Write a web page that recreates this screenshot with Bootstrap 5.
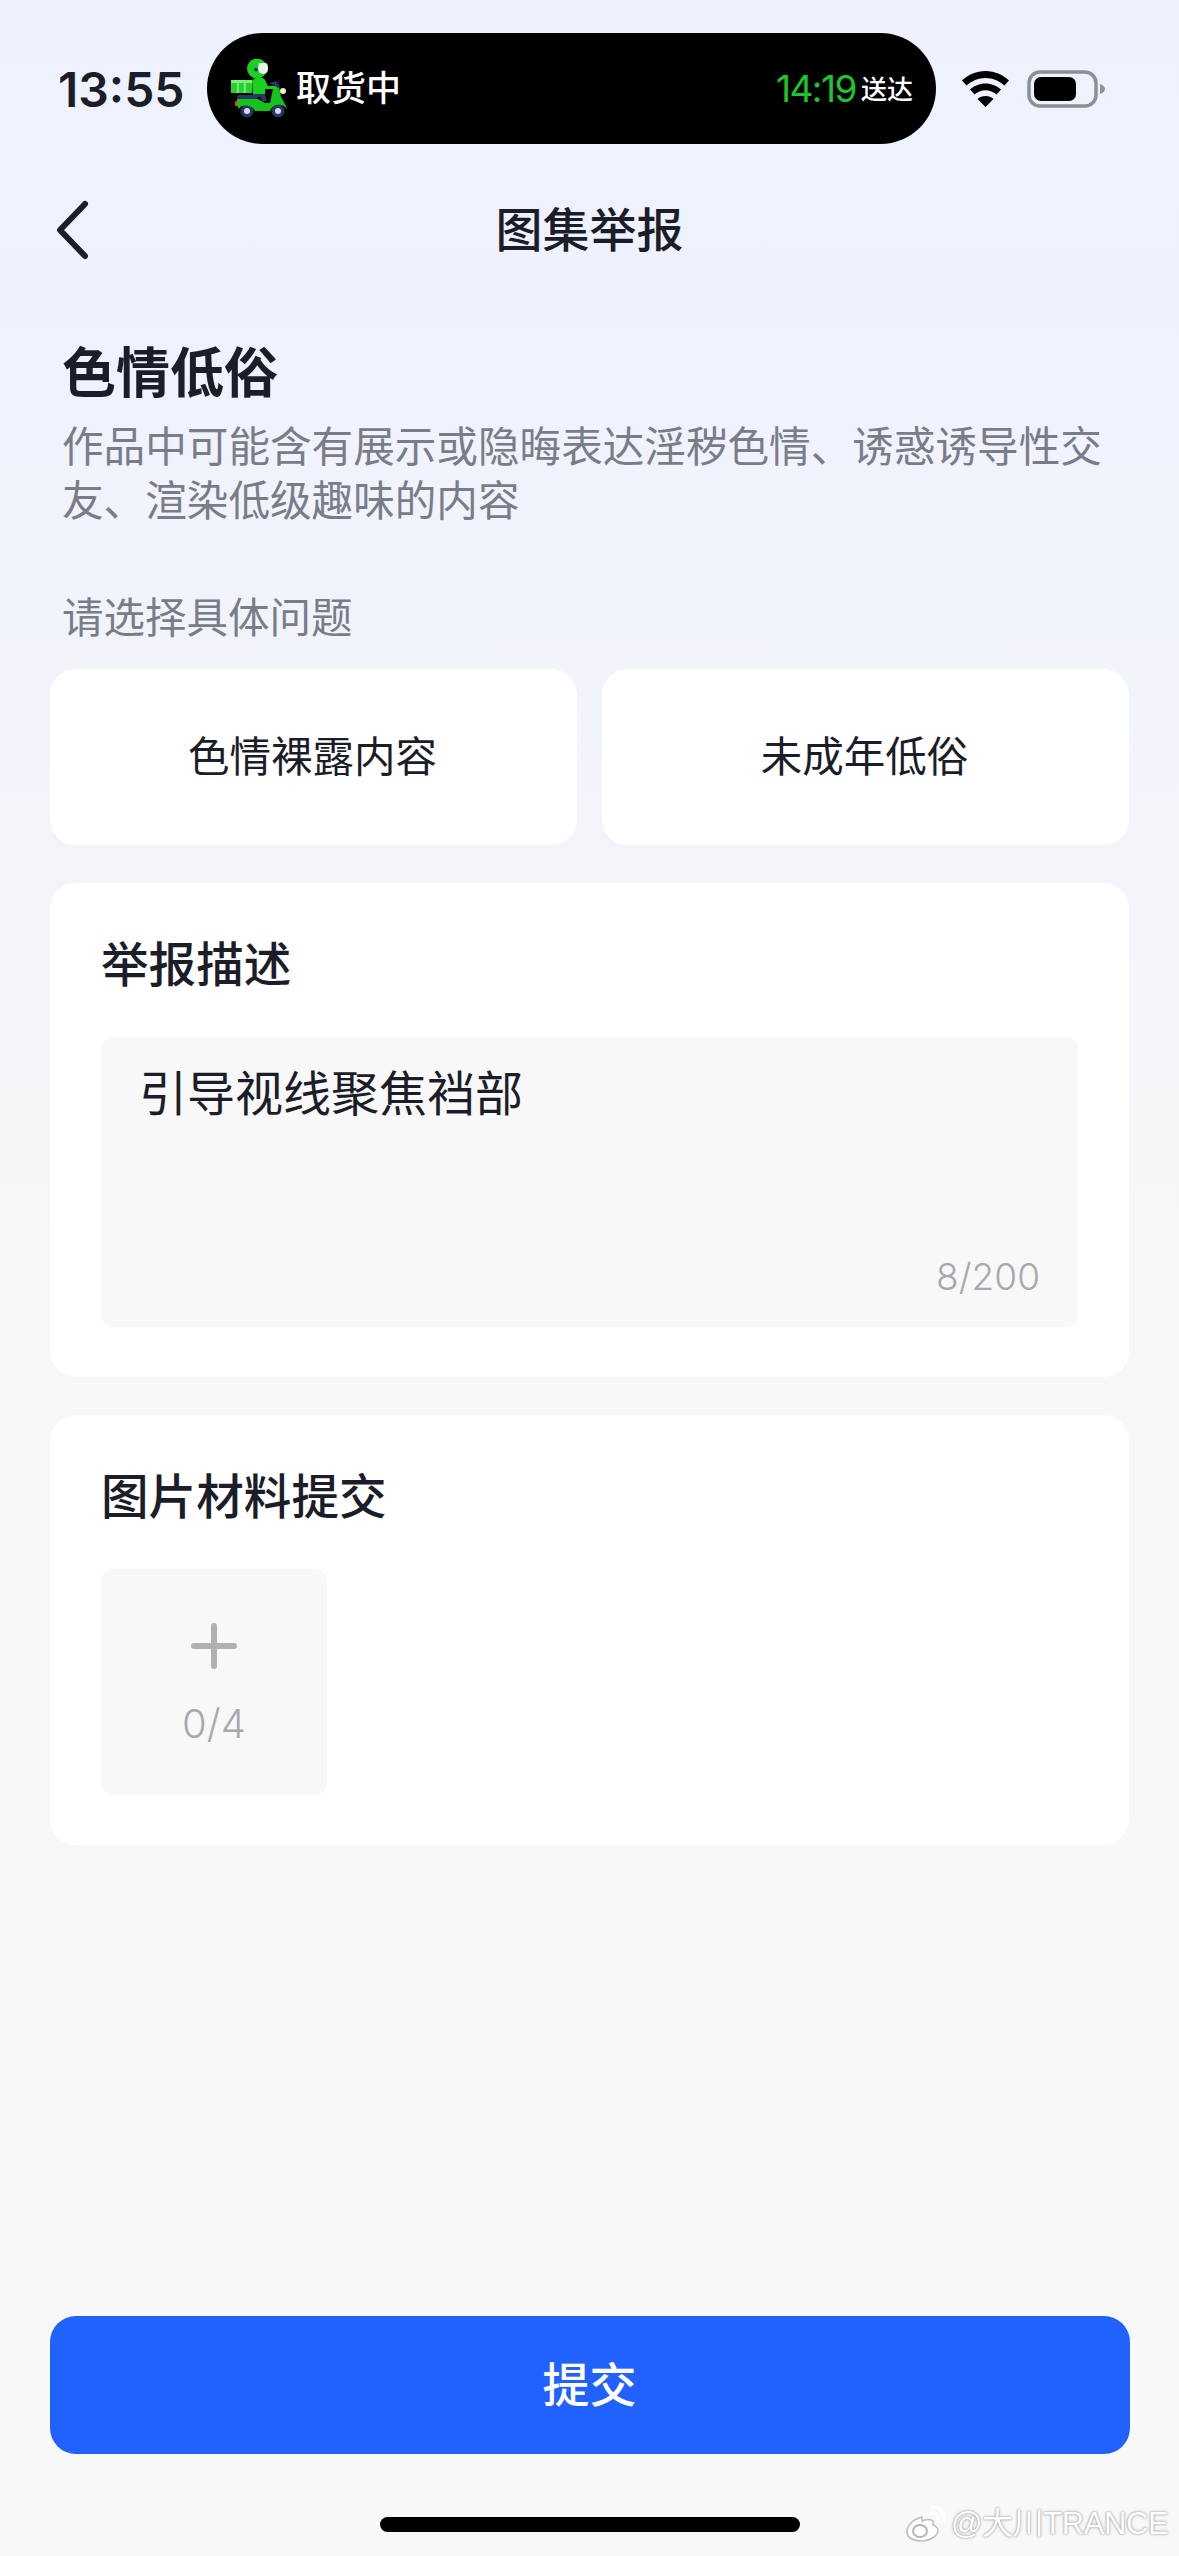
<!DOCTYPE html>
<html lang="zh-CN">
<head>
    <meta charset="UTF-8">
    <meta name="viewport" content="width=device-width, initial-scale=1.0">
    <title>图集举报</title>
    <link href="https://cdn.jsdelivr.net/npm/bootstrap@5.3.2/dist/css/bootstrap.min.css" rel="stylesheet">
    <style>
        body {
            width: 1179px;
            height: 2556px;
            overflow: hidden;
            font-family: Inter, "Noto Sans CJK SC", sans-serif;
            color: #1b1d28;
            background: linear-gradient(180deg, #eef2ff 0, #eff2fe 300px, #f4f5fa 900px, #f8f8f8 1400px, #f8f8f8 100%);
        }
        .phone-page { height: 2556px; position: relative; }

        /* status bar */
        .status-row { padding: 33px 0 0 58px; height: 144px; }
        .clock { width: 149px; font-size: 48px; font-weight: 600; line-height: 1; margin-top: 3px; }
        .island { width: 729px; height: 111px; background: #000; border-radius: 56px; color: #fff; padding: 0 23px 0 24px; }
        .island-label { font-size: 35px; font-weight: 500; margin-left: 8px; line-height: 1; }
        .eta-time { color: #1fc52f; font-size: 37px; line-height: 1; letter-spacing: -1.5px; }
        .eta-text { font-size: 26px; font-weight: 500; line-height: 1; margin-left: 5px; margin-top: 3px; }
        .wifi-icon { margin-left: 26px; }
        .batt-icon { margin-left: 18px; }

        /* nav */
        .top-nav { margin-top: 28px; height: 116px; padding-left: 56px; position: relative; }
        .top-title { font-size: 47px; font-weight: 500; line-height: 64px; position: absolute; left: 0; right: 0; top: 26px; text-align: center; }

        /* heading */
        .sect-head { padding: 50px 62px 0; }
        .sect-title { font-size: 54px; font-weight: 600; line-height: 72px; margin: 0; }
        .sect-desc { font-size: 41.6px; line-height: 54px; color: #797d89; margin: 10px 0 0; }
        .sect-label { font-size: 41.5px; line-height: 56px; color: #797d89; margin: 62px 0 0; }

        /* options + cards */
        .page-body { padding: 0 50px; }
        .opt-grid { margin-top: 23px; gap: 25px; }
        .opt-tile { flex: 1 1 0; height: 176px; background: #fff; border-radius: 26px; font-size: 41.5px; padding-right: 2px; }
        .white-box { background: #fff; border: 0; border-radius: 26px; padding: 50px 51px; }
        .box-desc { margin-top: 38px; }
        .box-pics { margin-top: 38px; }
        .box-title { font-size: 47.6px; font-weight: 500; line-height: 64px; margin: 0; }
        .desc-field { margin-top: 40px; height: 290px; background: #f8f8f8; border-radius: 12px; padding: 26px 38px 28px; }
        .desc-text { font-size: 48px; line-height: 62px; }
        .desc-count { font-size: 37px; font-weight: 300; line-height: 44px; color: #a8a8ae; }
        .pic-add { margin-top: 40px; width: 226px; height: 226px; background: #f8f8f8; border-radius: 12px; padding-top: 54px; }
        .pic-count { font-size: 40px; font-weight: 300; line-height: 44px; color: #a8a8ae; margin-top: 33px; }

        /* bottom */
        .submit-btn { width: 1080px; height: 138px; margin: 0 auto; background: #2162ff; border: 0; border-radius: 26px; color: #fff; font-size: 47px; font-weight: 500; display: block; }
        .home-bar { width: 420px; height: 15px; background: #000; border-radius: 8px; margin: 63px auto 24px; }

        .wm-mark { position: absolute; left: 905px; top: 2501px; color: #fff; font-size: 31px; letter-spacing: -.4px; line-height: 46px; text-shadow: 0 0 3px #9a9a9a, 0 0 1px #8a8a8a; white-space: nowrap; font-family: "Liberation Sans", "Noto Sans CJK SC", sans-serif; }
    </style>
</head>
<body>
<div class="phone-page d-flex flex-column">

    <!-- Status bar -->
    <div class="status-row d-flex align-items-start">
        <div class="clock align-self-center">13:55</div>
        <div class="island d-flex align-items-center">
            <svg width="57" height="59" viewBox="0 0 57 59">
                <circle cx="16" cy="52" r="6.500" fill="#2b3563"/><circle cx="16" cy="52" r="3" fill="#d5d9f0"/>
                <circle cx="47" cy="52" r="6.500" fill="#2b3563"/><circle cx="47" cy="52" r="3" fill="#d5d9f0"/>
                <path d="M6 40H27L34 44H39L42 30L48 28L50 38L55 47L56 50C52 44 42 44 39 52H24C22 46 10 44 8 50L6 47z" fill="#14c41a"/>
                <rect x="4" y="42" width="2.500" height="5" fill="#e23b2e"/>
                <rect x="6" y="36" width="21" height="4" rx="2" fill="#2b3563"/>
                <path d="M22 33H33L36 42H31L29 38H22z" fill="#2b3563"/>
                <path d="M21 22C23 18 32 17 34 21L37 27H46V30H34V35H22z" fill="#1ad11f"/>
                <path d="M38 24L45 22L49 27L46 28z" fill="#2b3563"/>
                <rect x="0" y="21" width="21" height="13" fill="#22d32a"/>
                <rect x="0" y="21" width="21" height="3" fill="#7df07c"/>
                <rect x="6" y="24" width="1.500" height="10" fill="#9ff39c"/>
                <rect x="13" y="24" width="1.500" height="10" fill="#9ff39c"/>
                <circle cx="26" cy="9.500" r="10" fill="#1fd024"/>
                <path d="M28 4h7c2 1 2 4 2 6 0 3-2 5-5 5-3 0-5-3-5-6z" fill="#e8f0ea"/>
                <circle cx="25" cy="10.500" r="2" fill="#2b3563"/>
                <circle cx="52" cy="32" r="3" fill="#f3ecc8"/>
            </svg>
            <span class="island-label">取货中</span>
            <span class="eta-time ms-auto">14:19</span>
            <span class="eta-text">送达</span>
        </div>
        <svg class="wifi-icon align-self-center" width="47" height="36" viewBox="0 0 47 36">
            <path d="M23.500 0C14.500 0 6.500 3.500 0 9.500l4.500 5C9.500 10 16 7 23.500 7s14 3 19 7.500l4.500-5C40.500 3.500 32.500 0 23.500 0z" fill="#000"/>
            <path d="M23.500 12.500C17.500 12.500 12 15 8 18.500l4.500 5c3-2.700 6.800-4.300 11-4.300s8 1.600 11 4.300l4.500-5c-4-3.500-9.500-6-15.500-6z" fill="#000"/>
            <path d="M23.500 25c-3.200 0-6 1.200-8 3l8 8 8-8c-2-1.800-4.800-3-8-3z" fill="#000"/>
        </svg>
        <svg class="batt-icon align-self-center" width="78" height="38" viewBox="0 0 78 38">
            <rect x="2" y="2" width="67" height="34" rx="11" fill="none" stroke="#8e8e93" stroke-width="3.500"/>
            <rect x="7" y="7" width="42" height="24" rx="7" fill="#000"/>
            <path d="M73 14c3 1 5 3 5 5s-2 4-5 5z" fill="#8e8e93"/>
        </svg>
    </div>

    <!-- Nav -->
    <div class="top-nav d-flex align-items-center">
        <svg width="34" height="60" viewBox="0 0 34 60">
            <path d="M29 4 4 30l25 26" fill="none" stroke="#1b1d28" stroke-width="6" stroke-linecap="round" stroke-linejoin="round"/>
        </svg>
        <div class="top-title">图集举报</div>
    </div>

    <!-- Category -->
    <div class="sect-head">
        <h1 class="sect-title">色情低俗</h1>
        <p class="sect-desc">作品中可能含有展示或隐晦表达淫秽色情、诱惑诱导性交友、渲染低级趣味的内容</p>
        <p class="sect-label">请选择具体问题</p>
    </div>

    <div class="page-body">
        <div class="opt-grid d-flex">
            <div class="opt-tile d-flex align-items-center justify-content-center">色情裸露内容</div>
            <div class="opt-tile d-flex align-items-center justify-content-center">未成年低俗</div>
        </div>

        <div class="card white-box box-desc">
            <h2 class="box-title">举报描述</h2>
            <div class="desc-field d-flex flex-column justify-content-between">
                <div class="desc-text">引导视线聚焦裆部</div>
                <div class="desc-count text-end">8/200</div>
            </div>
        </div>

        <div class="card white-box box-pics">
            <h2 class="box-title">图片材料提交</h2>
            <div class="pic-add d-flex flex-column align-items-center">
                <svg width="46" height="46" viewBox="0 0 46 46">
                    <path d="M23 3v40M3 23h40" stroke="#b0b0b5" stroke-width="6" stroke-linecap="round"/>
                </svg>
                <div class="pic-count">0/4</div>
            </div>
        </div>
    </div>

    <div class="mt-auto">
        <button type="button" class="btn submit-btn">提交</button>
        <div class="home-bar"></div>
    </div>

    <!-- Watermark -->
    <div class="wm-mark d-flex align-items-center">
        <svg width="42" height="38" viewBox="0 0 42 38">
            <path d="M17 12C8 14 2 21 2 27c0 6 7 9 14 9 9 0 17-5 17-11 0-3-3-4-5-5 1-3 0-5-2-5-2-1-6 0-9 1z" fill="#fff" stroke="#bdbdbd" stroke-width="1.500"/>
            <ellipse cx="15" cy="26" rx="7" ry="6" fill="none" stroke="#b5b5b5" stroke-width="2"/>
            <path d="M26 8c4-1 8 2 7 7M27 2c8-1 14 6 12 14" fill="none" stroke="#fff" stroke-width="3" stroke-linecap="round"/>
        </svg>
        <span class="ms-1">@大川TRANCE</span>
    </div>
</div>
<script src="https://cdn.jsdelivr.net/npm/bootstrap@5.3.2/dist/js/bootstrap.bundle.min.js"></script>
</body>
</html>
